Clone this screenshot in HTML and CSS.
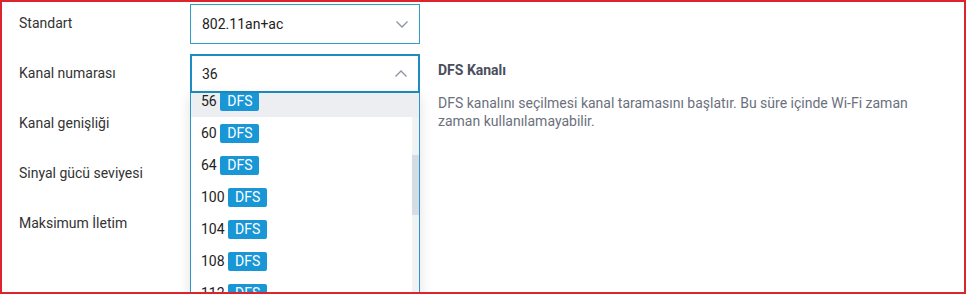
FILE: index.html
```html
<!DOCTYPE html>
<html lang="tr">
<head>
<meta charset="UTF-8">
<meta name="viewport" content="width=device-width, initial-scale=1.0">
<title>Kablosuz Ayarları</title>
<link rel="stylesheet" href="styles.css">
</head>
<body>
    <div class="frame">
        <div class="form">
            <div class="label">Standart</div>
            <div class="control">
                <div class="select">
                    <span>802.11an+ac</span>
                    <svg class="chevron" width="12" height="7" viewBox="0 0 12 7"><path d="M0.5 0.5 L6 6 L11.5 0.5" fill="none" stroke="#8b95a3" stroke-width="1.3"/></svg>
                </div>
            </div>
            <div class="spacer"></div>

            <div class="label">Kanal numarası</div>
            <div class="control">
                <div class="select open">
                    <span>36</span>
                    <svg class="chevron" width="12" height="7" viewBox="0 0 12 7"><path d="M0.5 6.5 L6 1 L11.5 6.5" fill="none" stroke="#8b95a3" stroke-width="1.3"/></svg>
                </div>
                <!-- açık liste -->
                <div class="dropdown">
                    <ul class="options">
                        <li class="active">56 <span class="badge">DFS</span></li>
                        <li>60 <span class="badge">DFS</span></li>
                        <li>64 <span class="badge">DFS</span></li>
                        <li>100 <span class="badge">DFS</span></li>
                        <li>104 <span class="badge">DFS</span></li>
                        <li>108 <span class="badge">DFS</span></li>
                        <li>112 <span class="badge">DFS</span></li>
                    </ul>
                    <div class="scroll-track"><div class="scroll-thumb"></div></div>
                </div>
            </div>
            <div class="hint">
                <h4>DFS Kanalı</h4>
                <p>DFS kanalını seçilmesi kanal taramasını başlatır. Bu süre içinde Wi-Fi zaman zaman kullanılamayabilir.</p>
            </div>

            <div class="label">Kanal genişliği</div>
            <div class="control"></div>

            <div class="label">Sinyal gücü seviyesi</div>
            <div class="control"></div>

            <div class="label">Maksimum İletim</div>
            <div class="control"></div>
        </div>
    </div>
</body>
</html>
```

FILE: styles.css
```css
body {
    margin: 0;
    background: #fff;
    font-family: Roboto, "Liberation Sans", Arial, sans-serif;
    font-size: 14px;
    color: #333;
}
.frame {
    width: 962px;
    height: 290px;
    border: 2px solid #d9252b;
    overflow: hidden;
}
.form {
    display: grid;
    grid-template-columns: 188px 230px 1fr;
    grid-auto-rows: 50px;
}
.label {
    grid-column: 1;
    padding-left: 17px;
    padding-top: 1px;
    line-height: 40px;
    color: #333;
}
.control {
    grid-column: 2;
    position: relative;
    padding-top: 2px;
}
.spacer {
    grid-column: 3;
}
.select {
    box-sizing: border-box;
    height: 40px;
    border: 1px solid #2f9ecb;
    display: flex;
    align-items: center;
    justify-content: space-between;
    padding: 0 11px 0 11px;
    color: #222;
    background: #fff;
}
.select.open {
    height: 39px;
    border: 2px solid #1c8cc2;
    padding-left: 10px;
}
.chevron {
    display: block;
}
.dropdown {
    position: absolute;
    left: 0;
    top: 41px;
    width: 230px;
    height: 220px;
    box-sizing: border-box;
    border: 1px solid #2b95c7;
    border-top: none;
    background: #fff;
    overflow: hidden;
    box-shadow: 0 3px 12px rgba(0, 0, 0, 0.12);
    z-index: 2;
}
.options {
    list-style: none;
    margin: -8px 0 0 0;
    padding: 0;
}
.options li {
    height: 32px;
    display: flex;
    align-items: center;
    padding-left: 10px;
    color: #222;
    white-space: pre;
}
.options li.active {
    background: #eceef1;
}
.badge {
    display: inline-block;
    height: 19px;
    line-height: 19px;
    padding: 0 7px;
    background: #1896d5;
    color: #fff;
    border-radius: 2px;
}
.scroll-track {
    position: absolute;
    right: 0;
    top: 24px;
    bottom: 0;
    width: 7px;
    background: #f1f2f4;
}
.scroll-thumb {
    margin-top: 38px;
    height: 60px;
    background: #d6dce3;
}
.hint {
    grid-column: 3;
    grid-row: 2 / span 3;
    padding: 9px 0 0 18px;
    width: 480px;
}
.hint h4 {
    margin: 0;
    font-size: 14px;
    line-height: 18px;
    font-weight: bold;
    color: #4a4f5d;
}
.hint p {
    margin: 15px 0 0 0;
    line-height: 18px;
    color: #6b707c;
}
```
